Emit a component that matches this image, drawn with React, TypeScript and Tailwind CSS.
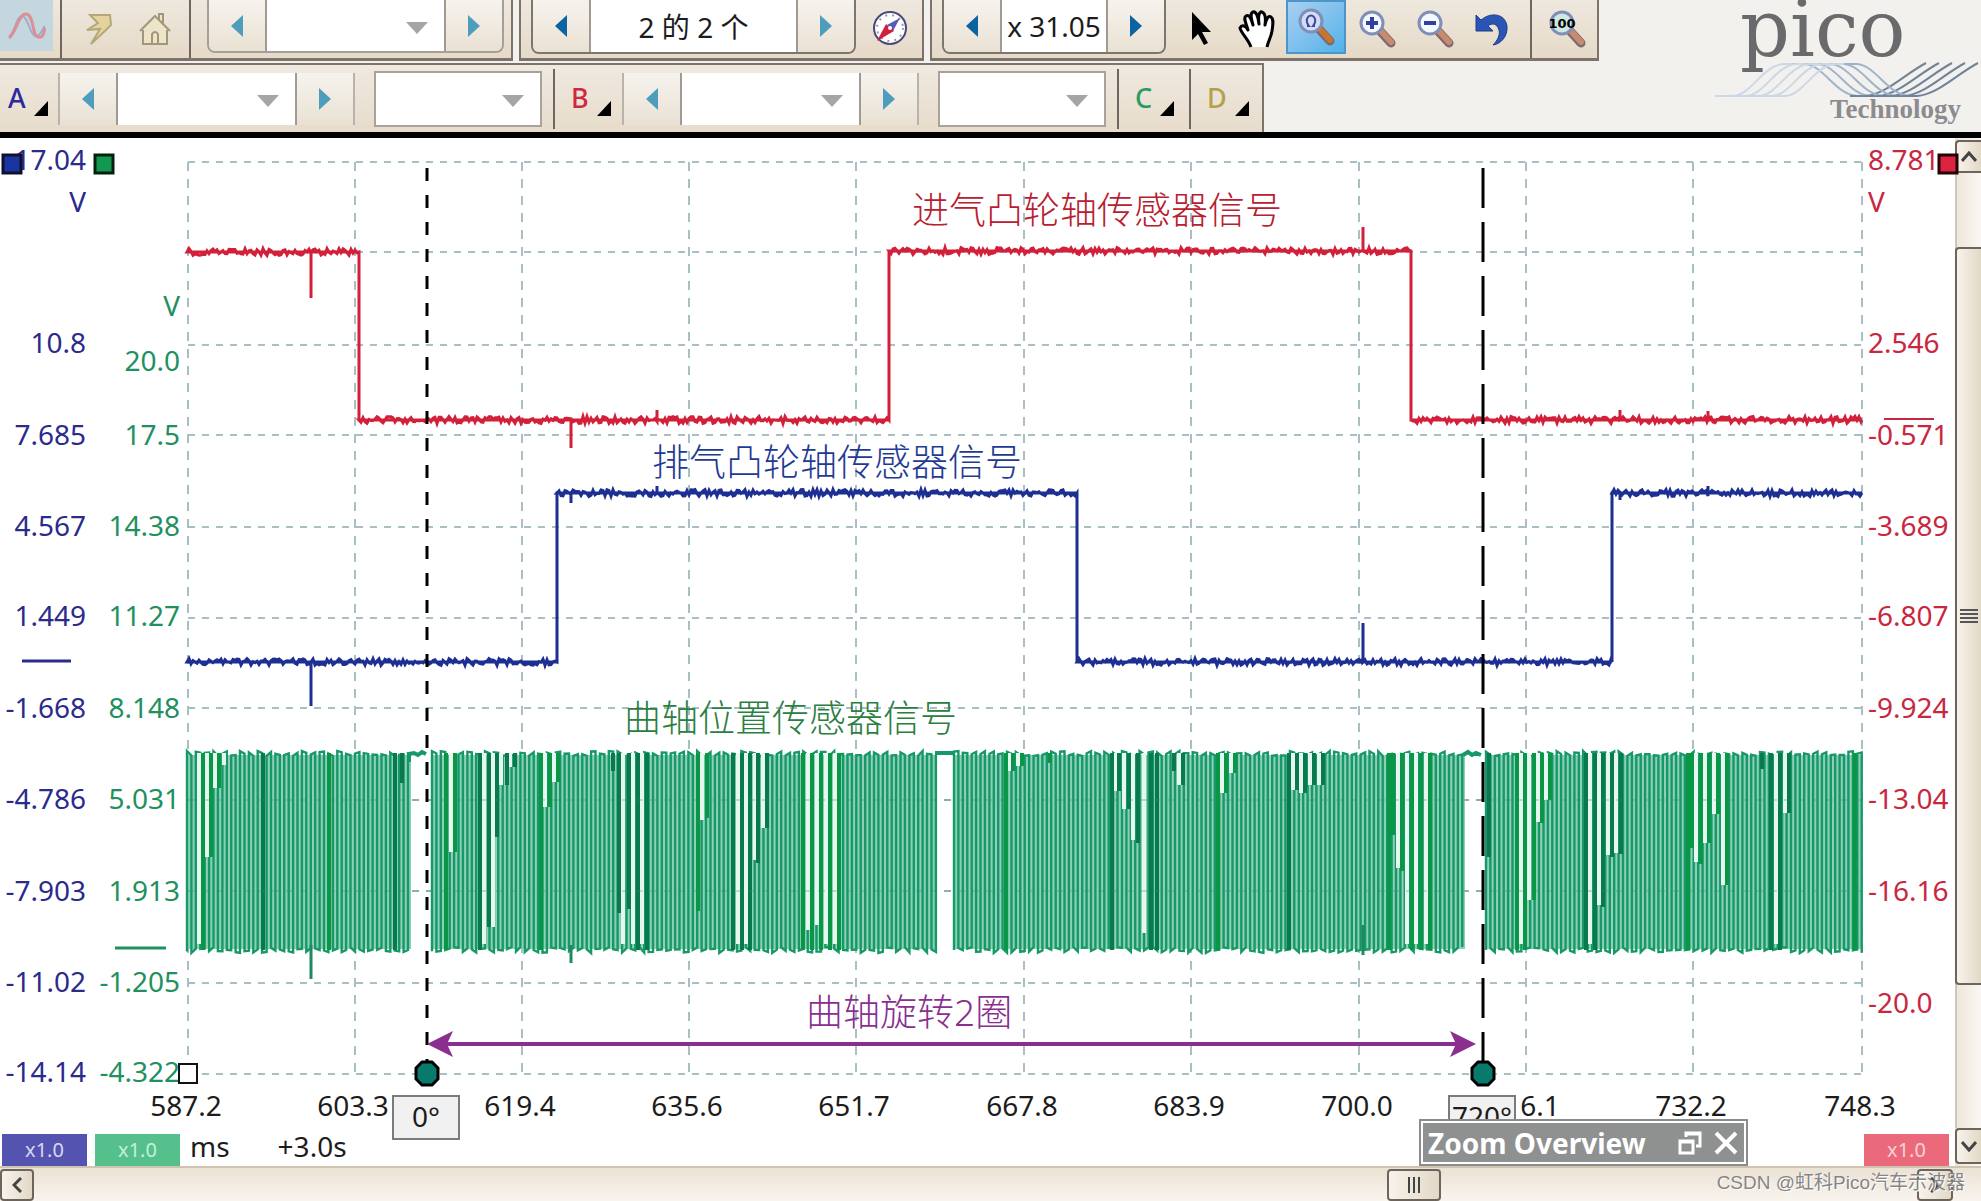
import type { ReactNode } from 'react'

const BLUE = '#2b2b8c'
const GREEN = '#1f9060'
const RED = '#c8283f'

const gridX = [188, 355, 522, 689, 856, 1024, 1191, 1359, 1526, 1693, 1862]
const gridY = [162, 252, 345, 435, 527, 618, 708, 800, 891, 983, 1074]
const timeLabels = ['587.2', '603.3', '619.4', '635.6', '651.7', '667.8', '683.9', '700.0', '716.1', '732.2', '748.3']

const blueLabels: [string, number][] = [
  ['17.04', 160], ['V', 202], ['10.8', 343], ['7.685', 435], ['4.567', 526], ['1.449', 616],
  ['-1.668', 708], ['-4.786', 799], ['-7.903', 891], ['-11.02', 982], ['-14.14', 1072],
]
const greenLabels: [string, number][] = [
  ['V', 306], ['20.0', 361], ['17.5', 435], ['14.38', 526], ['11.27', 616],
  ['8.148', 708], ['5.031', 799], ['1.913', 891], ['-1.205', 982], ['-4.322', 1072],
]
const redLabels: [string, number][] = [
  ['8.781', 160], ['V', 202], ['2.546', 343], ['-0.571', 435], ['-3.689', 526], ['-6.807', 616],
  ['-9.924', 708], ['-13.04', 799], ['-16.16', 891], ['-20.0', 1003],
]

// small repeatable noise so the traces look the same on every render
function noise(seed: number) {
  let s = seed
  return () => {
    s = (s * 16807) % 2147483647
    return s / 2147483647
  }
}

type Level = { from: number; to: number; y: number }
type Spike = { x: number; y: number }

function camTrace(levels: Level[], spikes: Spike[], seed: number) {
  const rnd = noise(seed)
  let d = ''
  for (const l of levels) {
    // flat base line first, then the noise on top of it
    d += `${d ? 'L' : 'M'}${l.from},${l.y}H${l.to}H${l.from}`
    for (let x = l.from + 2; x < l.to; x += 2) {
      d += `L${x},${(l.y + (rnd() - 0.5) * 7).toFixed(1)}`
      const spike = spikes.find((s) => s.x >= x && s.x < x + 2 && Math.abs(s.y - l.y) < 60)
      if (spike) d += `L${spike.x},${l.y}V${spike.y}V${l.y}`
    }
    d += `L${l.to},${l.y}`
  }
  return d
}

const intake = camTrace(
  [
    { from: 187, to: 359, y: 252 },
    { from: 359, to: 889, y: 420 },
    { from: 889, to: 1411, y: 251 },
    { from: 1411, to: 1862, y: 420 },
  ],
  [{ x: 311, y: 298 }, { x: 571, y: 448 }, { x: 657, y: 410 }, { x: 1363, y: 227 }, { x: 1620, y: 410 }, { x: 1708, y: 411 }],
  41
)
const exhaust = camTrace(
  [
    { from: 187, to: 557, y: 662 },
    { from: 557, to: 1077, y: 493 },
    { from: 1077, to: 1612, y: 662 },
    { from: 1612, to: 1862, y: 493 },
  ],
  [{ x: 311, y: 706 }, { x: 571, y: 503 }, { x: 657, y: 486 }, { x: 1363, y: 623 }, { x: 1620, y: 500 }, { x: 1708, y: 486 }],
  97
)

// crank signal: toothed blocks separated by the missing-tooth gaps
const blocks = [[187, 411], [432, 937], [954, 1465], [1486, 1862]]

function crankTrace(from: number, to: number) {
  const rnd = noise(from * 13)
  const half = 4.42
  let d = `M${from},950`
  let up = true
  for (let x = from; x <= to; x += half) {
    const top = 751 + rnd() * 5
    const bottom = 947 + rnd() * 6
    d += up
      ? `L${x.toFixed(1)},${bottom.toFixed(1)}L${x.toFixed(1)},${top.toFixed(1)}`
      : `L${x.toFixed(1)},${top.toFixed(1)}L${x.toFixed(1)},${bottom.toFixed(1)}`
    up = !up
  }
  return d
}

const slots: [number, number][] = [
  [199, 944], [207, 857], [215, 788], [224, 765], [451, 852], [484, 944], [493, 927], [501, 785], [510, 767],
  [545, 807], [554, 782], [623, 944], [633, 944], [642, 944], [702, 820], [738, 944], [746, 944], [755, 860], [763, 828],
  [808, 930], [817, 925], [826, 944], [835, 944], [1009, 771], [1018, 766], [1115, 791], [1124, 809], [1133, 840],
  [1144, 933], [1179, 785], [1222, 793], [1231, 773], [1293, 790], [1301, 793], [1310, 785], [1319, 785],
  [1398, 868], [1407, 944], [1416, 944], [1426, 944], [1521, 944], [1529, 900], [1538, 822], [1546, 800],
  [1590, 944], [1599, 905], [1608, 855], [1616, 853], [1696, 862], [1705, 843], [1714, 814], [1723, 885],
  [1776, 944], [1785, 813],
]
const brightLines: [number, number][] = [
  [203, 950], [211, 857], [219, 788], [329, 950], [446, 950], [455, 852], [541, 950], [550, 807], [558, 782],
  [698, 911], [707, 818], [803, 950], [812, 950], [821, 950], [830, 950], [839, 950], [1006, 950], [1013, 771],
  [1022, 766], [1050, 763], [1218, 950], [1226, 793], [1235, 773], [1389, 950], [1393, 835], [1402, 871], [1412, 950],
  [1421, 950], [1430, 950], [1517, 950], [1525, 950], [1534, 900], [1542, 823], [1550, 800], [1688, 950], [1692, 848],
  [1701, 864], [1709, 843], [1718, 814], [1727, 885], [1855, 950],
]
const darkLines: [number, number][] = [
  [263, 950], [395, 950], [402, 783], [480, 950], [489, 927], [497, 837], [507, 785], [515, 767], [613, 771],
  [619, 913], [629, 909], [638, 950], [647, 950], [733, 950], [742, 950], [750, 950], [758, 863], [767, 828],
  [1112, 950], [1119, 791], [1129, 809], [1138, 843], [1151, 950], [1157, 950], [1174, 771], [1183, 785],
  [1289, 950], [1297, 790], [1305, 793], [1314, 785], [1323, 785], [1489, 857], [1586, 950], [1595, 950],
  [1603, 907], [1612, 857], [1621, 854], [1762, 769], [1771, 950], [1780, 950], [1789, 813],
]

const bars = (items: [number, number][]) => items.map(([x, y]) => `M${x},753V${y}`).join('')

function Marker({ x }: { x: number }) {
  return (
    <path
      d={`M${x - 5},1062h10l6,6v11l-6,6h-10l-6,-6v-11z`}
      fill="#077a6c"
      stroke="#000"
      strokeWidth="3"
    />
  )
}

function Chart() {
  return (
    <svg
      viewBox="0 138 1955 996"
      className="block w-full overflow-visible font-['Noto_Sans','Noto_Sans_CJK_SC',sans-serif] text-[28px]"
      role="img"
      aria-label="Waveforms"
    >
      <g stroke="#a8bfc4" strokeWidth="2" fill="none">
        {gridY.map((y) => <path key={y} d={`M188,${y}H1862`} strokeDasharray="7 7" />)}
        {gridX.map((x) => <path key={x} d={`M${x},162V1074`} strokeDasharray="9 8" />)}
      </g>

      {blocks.map(([a, b]) => (
        <g key={a}>
          <rect x={a} y="755" width={b - a} height="194" fill="#8fd0b4" />
          <path d={crankTrace(a, b)} fill="none" stroke="#16996a" strokeWidth="2.4" />
        </g>
      ))}
      <path d="M409,762v-8l5,-1l4,2l4,-3l4,2M935,753h20M1463,755l5,-3l4,3l4,-2l5,2" stroke="#16996a" strokeWidth="4" fill="none" />
      <path d={bars(slots)} stroke="#e6f7f0" strokeWidth="4" />
      <path d={bars(brightLines)} stroke="#0a9647" strokeWidth="4" />
      <path d={bars(darkLines)} stroke="#087a4e" strokeWidth="4" />
      <path d="M311,945V979M571,945V963M1363,925V955" stroke="#1f8a62" strokeWidth="3" />
      <path d="M188,800H1862M188,891H1862" stroke="#2b8f6a" strokeWidth="1" strokeDasharray="7 7" opacity="0.5" />

      <path d={intake} fill="none" stroke="#d3203a" strokeWidth="3" />
      <path d={exhaust} fill="none" stroke="#1d2f92" strokeWidth="3" />

      <path d="M427,168V1062" stroke="#000" strokeWidth="3" strokeDasharray="13 14" />
      <path d="M1483,168V1062" stroke="#000" strokeWidth="3" strokeDasharray="40 14" />

      <g stroke="#8a2f8f" fill="#8a2f8f">
        <path d="M445,1044H1460" strokeWidth="4" />
        <path d="M427,1044l26,-13l-6,13l6,13zM1476,1044l-26,-13l6,13l-6,13z" stroke="none" />
      </g>

      <g className="text-[37px] font-light">
        <text x="912" y="224" fill="#b8202f">进气凸轮轴传感器信号</text>
        <text x="652" y="476" fill="#1f3a93">排气凸轮轴传感器信号</text>
        <text x="624" y="732" fill="#2a8040">曲轴位置传感器信号</text>
        <text x="806" y="1026" fill="#8a2f8f">曲轴旋转2圈</text>
      </g>

      <g fill={BLUE} textAnchor="end">
        {blueLabels.map(([t, y]) => <text key={t} x="86" y={y + 10}>{t}</text>)}
      </g>
      <g fill={GREEN} textAnchor="end">
        {greenLabels.map(([t, y]) => <text key={t} x="180" y={y + 10}>{t}</text>)}
      </g>
      <g fill={RED}>
        {redLabels.map(([t, y]) => <text key={t} x="1868" y={y + 10}>{t}</text>)}
      </g>
      <g fill="#1c1c1c" textAnchor="middle">
        {timeLabels.map((t, i) => <text key={t} x={gridX[i] - 2} y="1116">{t}</text>)}
      </g>

      <path d="M22,661H71" stroke={BLUE} strokeWidth="3" />
      <path d="M115,948H166" stroke={GREEN} strokeWidth="3" />
      <path d="M1884,419H1934" stroke={RED} strokeWidth="2" />

      <rect x="3" y="155" width="18" height="18" fill="#1b35a0" stroke="#101030" strokeWidth="3" />
      <rect x="95" y="155" width="18" height="18" fill="#12994f" stroke="#06200f" strokeWidth="3" />
      <rect x="1939" y="155" width="18" height="18" fill="#dc2340" stroke="#200408" strokeWidth="3" />
      <rect x="179" y="1064" width="18" height="19" fill="#fff" stroke="#111" strokeWidth="2" />
      <Marker x={427} />
      <Marker x={1483} />

      <g stroke="#7b7b7b" strokeWidth="2" fill="#f1f1f1">
        <rect x="393" y="1096" width="66" height="43" />
        <rect x="1449" y="1096" width="66" height="43" />
      </g>
      <g fill="#1c1c1c" textAnchor="middle">
        <text x="426" y="1127">0°</text>
        <text x="1482" y="1127">720°</text>
      </g>
    </svg>
  )
}

function Arrow({ left = false, dim = false }: { left?: boolean; dim?: boolean }) {
  return (
    <svg width="12" height="22" viewBox="0 0 12 22" aria-hidden="true">
      <path d={left ? 'M12,0V22L0,11z' : 'M0,0V22L12,11z'} fill={dim ? '#4f9dbd' : '#0b64a0'} />
    </svg>
  )
}

function Stepper({ children, className, dim = '' }: { children: ReactNode; className: string; dim?: '' | 'left' | 'both' | 'right' }) {
  return (
    <div className={`flex overflow-hidden ${className}`}>
      <button aria-label="Previous" className="flex w-14 shrink-0 items-center justify-center bg-linear-to-b from-[#f6f3ee] to-[#eae1d3]">
        <Arrow left dim={dim === 'both' || dim === 'left'} />
      </button>
      <div className="relative min-w-0 flex-1 border-x-2 border-[#a09a92] bg-white">{children}</div>
      <button aria-label="Next" className="flex w-14 shrink-0 items-center justify-center bg-linear-to-b from-[#f6f3ee] to-[#eae1d3]">
        <Arrow dim={dim === 'both' || dim === 'right'} />
      </button>
    </div>
  )
}

function Dropdown({ label }: { label: string }) {
  return (
    <div className="relative h-full w-full">
      <select aria-label={label} className="h-full w-full appearance-none bg-white" />
      <svg className="pointer-events-none absolute top-1/2 right-4 -mt-1" width="22" height="12" viewBox="0 0 22 12">
        <path d="M0,0H22L11,12z" fill="#a5a5a5" />
      </svg>
    </div>
  )
}

function Channel({ name, color }: { name: string; color: string }) {
  return (
    <button className={`flex h-full items-center gap-2 pl-2 text-[27px] font-medium ${color}`}>
      {name}
      <svg className="mt-5" width="14" height="15" viewBox="0 0 14 15">
        <path d="M14,0V15H0z" fill="#000" />
      </svg>
    </button>
  )
}

function Lens({ children, tint = '#f4f8ff', handle = '#c98a72' }: { children: ReactNode; tint?: string; handle?: string }) {
  return (
    <svg width="38" height="40" viewBox="0 0 38 40">
      <path d="M22,22L33,34" stroke="#7c6a70" strokeWidth="9" strokeLinecap="round" />
      <path d="M23,22L33,33" stroke={handle} strokeWidth="6" strokeLinecap="round" />
      <circle cx="14" cy="14" r="11" fill={tint} stroke="#7f8fb8" strokeWidth="3" />
      {children}
    </svg>
  )
}

const Divider = () => <div className="h-full w-[2px] shrink-0 bg-[#6f665f]" />

function TopBar() {
  return (
    <div className="flex h-[61px] gap-[6px]">
      <div className="flex w-[513px] border-r-2 border-b-3 border-[#7d736b] bg-linear-to-b from-[#eee8de] to-[#e6dac8]">
        <button aria-label="Scope" className="flex h-[51px] w-[53px] items-center justify-center bg-[#c5d7de]">
          <svg width="38" height="28" viewBox="0 0 38 28" fill="none" strokeWidth="2">
            <path d="M1,24C7,22 8,4 14,4S22,24 28,24S34,16 37,14" stroke="#9fadc8" />
            <path d="M1,26C8,22 10,2 18,2S24,24 30,25S35,22 37,16" stroke="#dc8f98" strokeWidth="3" />
          </svg>
        </button>
        <div className="ml-[7px]"><Divider /></div>
        <button aria-label="Automotive" className="ml-[22px] flex items-center">
          <svg width="30" height="34" viewBox="0 0 30 34">
            <path d="M6,3L26,3L27,13L22,18L7,32L16,17L3,18L14,11z" fill="#e3d49c" stroke="#b5a77c" strokeWidth="2" />
          </svg>
        </button>
        <button aria-label="Home" className="ml-6 flex items-center">
          <svg width="34" height="34" viewBox="0 0 34 34" fill="#eee4c8" stroke="#a2977c" strokeWidth="2">
            <path d="M5,18V32H29V18M2,19L17,4L32,19M25,12V2H21V8" />
            <path d="M14,31V22Q17,18 20,22V31" />
          </svg>
        </button>
        <div className="ml-[17px]"><Divider /></div>
        <Stepper dim="both" className="ml-4 h-[53px] w-[297px] shrink-0 rounded-b-lg border-2 border-t-0 border-[#a59f97]">
          <Dropdown label="Time base" />
        </Stepper>
      </div>

      <div className="flex w-[405px] border-x-2 border-b-3 border-[#7d736b] bg-linear-to-b from-[#eee8de] to-[#e6dac8]">
        <Stepper dim="right" className="ml-[10px] h-[54px] w-[325px] rounded-b-lg border-2 border-t-0 border-[#7d766f]">
          <input aria-label="Buffer" defaultValue="2 的 2 个" className="h-[52px] w-full text-center text-[28px] text-[#1c1c1c]" />
        </Stepper>
        <button aria-label="Navigator" className="ml-4 flex items-center">
          <svg width="36" height="38" viewBox="0 0 36 38">
            <ellipse cx="18" cy="18" rx="16" ry="16" fill="#fff" stroke="#4a4a78" strokeWidth="2" />
            <circle cx="18" cy="18" r="13" fill="none" stroke="#9a9ab4" strokeWidth="2" strokeDasharray="2 5" />
            <path d="M28,8L21,21L15,15z" fill="#5a5ab4" />
            <path d="M5,31L14,14L22,21z" fill="#d0203c" />
            <circle cx="18" cy="18" r="2" fill="#fff" />
          </svg>
        </button>
      </div>

      <div className="flex w-[669px] border-x-2 border-b-3 border-[#7d736b] bg-linear-to-b from-[#eee8de] to-[#e6dac8]">
        <Stepper className="ml-[10px] h-[54px] w-[224px] rounded-b-lg border-2 border-t-0 border-[#7d766f]">
          <input aria-label="Zoom factor" defaultValue="x 31.05" className="h-[52px] w-full text-center text-[28px] text-[#1c1c1c]" />
        </Stepper>
        <button aria-label="Select" className="ml-6 flex items-center">
          <svg width="24" height="36" viewBox="0 0 24 36">
            <path d="M2,1V29L8,23L14,34L18,32L12,21H21z" fill="#000" />
          </svg>
        </button>
        <button aria-label="Pan" className="ml-6 flex items-center">
          <svg width="40" height="40" viewBox="0 0 40 40">
            <path
              d="M13,38C10,30 3,24 2,19C4,15 8,17 10,21C8,14 5,9 8,7S13,9 15,16C13,9 12,4 15,3S20,7 21,15C20,8 21,2 24,3S28,8 27,16C28,11 30,6 33,8S35,15 34,22S30,32 29,38"
              fill="#fff" stroke="#000" strokeWidth="3" strokeLinejoin="round"
            />
          </svg>
        </button>
        <button aria-label="Zoom window" className="ml-2 flex h-[54px] w-[60px] items-center justify-center border-2 border-[#4d94c8] bg-linear-to-br from-[#a8cff0] to-[#4fb2ea]">
          <Lens handle="#c8762f" tint="#d3dcf4">
            <path d="M10,19H12Q8,14 11,10M18,19H16Q20,14 17,10M11,10Q14,7 17,10" stroke="#3b4a9a" strokeWidth="2" fill="none" />
          </Lens>
        </button>
        <button aria-label="Zoom in" className="ml-3 flex items-center">
          <Lens><path d="M14,8V20M8,14H20" stroke="#3040a0" strokeWidth="4" /></Lens>
        </button>
        <button aria-label="Zoom out" className="ml-5 flex items-center">
          <Lens><path d="M8,14H20" stroke="#3040a0" strokeWidth="4" /></Lens>
        </button>
        <button aria-label="Undo zoom" className="ml-5 flex items-center">
          <svg width="36" height="36" viewBox="0 0 36 36">
            <path d="M2,4L7,9C16,1 31,2 33,15C34,25 27,33 19,34C26,27 27,20 23,15C20,12 16,13 14,15L19,20H2z" fill="#2b55b4" stroke="#1f3c8c" />
          </svg>
        </button>
        <div className="ml-5"><Divider /></div>
        <button aria-label="Zoom to 100%" className="ml-4 flex items-center">
          <Lens tint="#cfe8e2">
            <text x="14" y="19" textAnchor="middle" className="font-['DejaVu_Sans'] text-[13px] font-bold" fill="#000">100</text>
          </Lens>
        </button>
      </div>
    </div>
  )
}

function ChannelBar() {
  return (
    <div className="mt-[2px] flex h-[69px] w-[1264px] items-center border-t-2 border-r-2 border-[#7d736b] bg-linear-to-b from-[#efe9e0] to-[#e7dccb]">
      <div className="h-full w-[58px]"><Channel name="A" color="text-[#2b2b9c]" /></div>
      <Stepper dim="both" className="h-[52px] w-[297px] border-x-2 border-[#b9b3ab]"><Dropdown label="Channel A range" /></Stepper>
      <div className="ml-[19px] h-[56px] w-[168px] border-2 border-[#a8a29a]"><Dropdown label="Channel A coupling" /></div>
      <div className="ml-[11px] h-[60px]"><Divider /></div>
      <div className="h-full w-[67px] pl-2"><Channel name="B" color="text-[#d02840]" /></div>
      <Stepper dim="both" className="h-[52px] w-[297px] border-x-2 border-[#b9b3ab]"><Dropdown label="Channel B range" /></Stepper>
      <div className="ml-[19px] h-[56px] w-[168px] border-2 border-[#a8a29a]"><Dropdown label="Channel B coupling" /></div>
      <div className="ml-[11px] h-[60px]"><Divider /></div>
      <div className="h-full w-[70px] pl-2"><Channel name="C" color="text-[#2a9a66]" /></div>
      <div className="h-[60px]"><Divider /></div>
      <div className="h-full w-[70px] pl-2"><Channel name="D" color="text-[#b5a04a]" /></div>
    </div>
  )
}

function Logo() {
  return (
    <svg width="281" height="132" viewBox="0 0 281 132" className="shrink-0">
      <g fill="none" strokeWidth="2">
        {[0, 1, 2, 3, 4].map((i) => {
          const o = i * 13
          return (
            <g key={i}>
              <path d={`M${15 + o},96H${32 + o}C${52 + o},96 ${62 + o},64 ${85 + o},64H${100 + o}`} stroke="#ccd8e8" />
              <path d={`M${92 + o},64H${105 + o}C${125 + o},66 ${135 + o},95 ${158 + o},96H${165 + o}`} stroke="#9fb4cc" />
              <path d={`M${150 + o},96H${165 + o}C${185 + o},95 ${205 + o},74 ${226 + o},63`} stroke="#708398" />
            </g>
          )
        })}
      </g>
      <text x="40" y="56" fill="#6a6a6c" className="font-['DejaVu_Serif',serif] text-[78px]">pico</text>
      <text x="130" y="118" fill="#8c8c8e" className="font-['Liberation_Serif',serif] text-[27px] font-bold">Technology</text>
    </svg>
  )
}

const thumb = 'border-2 border-[#6d655c] bg-linear-to-r from-[#f7f3ec] to-[#e2d8c6] flex items-center justify-center'

function VerticalScroll() {
  return (
    <div className="flex w-[26px] shrink-0 flex-col bg-linear-to-r from-[#ede5d8] to-[#faf7f2]">
      <button aria-label="Scroll up" className={`mt-[2px] h-[33px] rounded-l border-r-0 ${thumb}`}>
        <svg width="16" height="11" viewBox="0 0 16 11" fill="none" stroke="#444" strokeWidth="3"><path d="M1,10L8,2L15,10" /></svg>
      </button>
      <div className="flex flex-1 flex-col border-l-2 border-[#cfc6b8]">
        <div className="h-[74px]" />
        <div className={`-ml-[2px] h-[738px] rounded-l border-r-0 ${thumb}`}>
          <svg width="18" height="14" viewBox="0 0 18 14" stroke="#555" strokeWidth="2"><path d="M0,1H18M0,5H18M0,9H18M0,13H18" /></svg>
        </div>
      </div>
      <button aria-label="Scroll down" className={`mb-[2px] h-[36px] rounded-l border-r-0 ${thumb}`}>
        <svg width="16" height="11" viewBox="0 0 16 11" fill="none" stroke="#444" strokeWidth="3"><path d="M1,1L8,9L15,1" /></svg>
      </button>
    </div>
  )
}

function HorizontalScroll() {
  return (
    <div className="relative flex h-[35px] items-center border-t-2 border-[#cfc4b2] bg-linear-to-b from-[#ece2d4] to-[#f8f4ee]">
      <button aria-label="Scroll left" className={`h-[32px] w-[34px] rounded ${thumb}`}>
        <svg width="10" height="16" viewBox="0 0 10 16" fill="none" stroke="#444" strokeWidth="3"><path d="M9,1L2,8L9,15" /></svg>
      </button>
      <div className="flex-1" />
      <div className={`h-[32px] w-[54px] rounded ${thumb}`}>
        <svg width="14" height="16" viewBox="0 0 14 16" stroke="#444" strokeWidth="2"><path d="M2,0V16M7,0V16M12,0V16" /></svg>
      </div>
      <div className="w-[476px]" />
      <button aria-label="Scroll right" className={`mr-7 h-[32px] w-[36px] rounded ${thumb}`}>
        <svg width="10" height="16" viewBox="0 0 10 16" fill="none" stroke="#444" strokeWidth="3"><path d="M1,1L8,8L1,15" /></svg>
      </button>
      <p className="absolute right-4 bottom-1 font-['Liberation_Sans','Noto_Sans_CJK_SC',sans-serif] text-[19px] leading-7 whitespace-nowrap text-[#858585] [text-shadow:1px_1px_0_#fff]">
        CSDN @虹科Pico汽车示波器
      </p>
    </div>
  )
}

export default function App() {
  return (
    <div className="overflow-hidden bg-white font-['Noto_Sans','Noto_Sans_CJK_SC',sans-serif]">
      <header className="flex justify-between border-b-6 border-black bg-[#f3f1ee]">
        <div>
          <TopBar />
          <ChannelBar />
        </div>
        <Logo />
      </header>

      <main className="flex">
        <div className="relative min-w-0 flex-1">
          <Chart />
          <footer className="flex h-8 items-center pl-[2px] text-[28px] leading-6 text-[#1c1c1c]">
            <button className="h-8 w-[85px] bg-[#5553b0] text-[20px] text-[#d8d8f4]">x1.0</button>
            <button className="ml-2 h-8 w-[85px] bg-[#55c08c] text-[20px] text-[#c4f0dc]">x1.0</button>
            <span className="ml-[10px] pb-2">ms</span>
            <span className="ml-12 pb-2">+3.0s</span>
            <button className="mr-[6px] ml-auto h-8 w-[85px] bg-[#ea6a7c] text-[20px] text-[#fbd0d8]">x1.0</button>
          </footer>
          <div className="absolute right-[207px] bottom-0 flex h-[47px] w-[329px] items-center border-2 border-[#8c8c8c] bg-white p-[2px]">
            <div className="flex h-full w-full items-center bg-[#8f9090] pl-[5px] text-white">
              <h2 className="text-[28px] leading-9 font-bold whitespace-nowrap">Zoom Overview</h2>
              <button aria-label="Restore" className="ml-auto">
                <svg width="24" height="24" viewBox="0 0 24 24" fill="none" stroke="#fff" strokeWidth="3">
                  <path d="M2,10H15V22H2zM2,11H15M8,6V2H22V15H18M8,3H22" />
                </svg>
              </button>
              <button aria-label="Close" className="mr-[6px] ml-3">
                <svg width="24" height="24" viewBox="0 0 24 24" stroke="#fff" strokeWidth="4"><path d="M2,2L22,22M22,2L2,22" /></svg>
              </button>
            </div>
          </div>
        </div>
        <VerticalScroll />
      </main>
      <HorizontalScroll />
    </div>
  )
}
